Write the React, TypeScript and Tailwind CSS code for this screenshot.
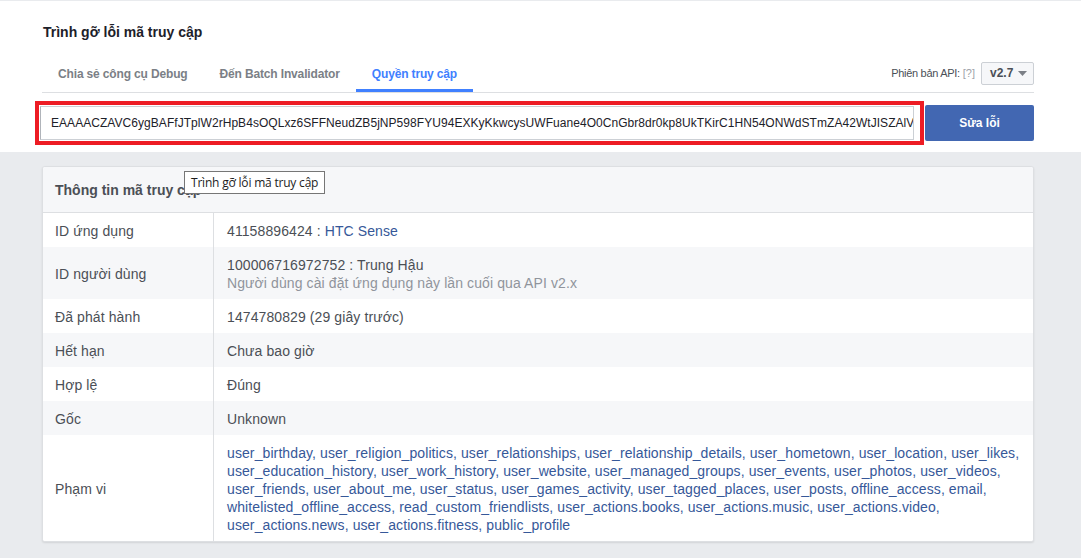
import React from "react";

const token =
  "EAAAACZAVC6ygBAFfJTplW2rHpB4sOQLxz6SFFNeudZB5jNP598FYU94EXKyKkwcysUWFuane4O0CnGbr8dr0kp8UkTKirC1HN54ONWdSTmZA42WtJISZAlV";

const scopeLines = [
  "user_birthday, user_religion_politics, user_relationships, user_relationship_details, user_hometown, user_location, user_likes,",
  "user_education_history, user_work_history, user_website, user_managed_groups, user_events, user_photos, user_videos,",
  "user_friends, user_about_me, user_status, user_games_activity, user_tagged_places, user_posts, offline_access, email,",
  "whitelisted_offline_access, read_custom_friendlists, user_actions.books, user_actions.music, user_actions.video,",
  "user_actions.news, user_actions.fitness, public_profile",
];

function Row({
  label,
  children,
  gray,
}: {
  label: string;
  children: React.ReactNode;
  gray?: boolean;
}) {
  return (
    <div className={`flex ${gray ? "bg-[#f6f7f9]" : "bg-white"}`}>
      <div className="w-[171px] shrink-0 border-r border-[#dddfe2] pl-[12px] pt-[2px] flex items-center text-[14px] leading-[18px] tracking-[0.1px] text-[#4b4f56]">
        {label}
      </div>
      <div className="flex-1 pl-[13px] pt-[9px] pb-[7px] text-[14px] leading-[18px] tracking-[0.1px] text-[#4b4f56]">
        {children}
      </div>
    </div>
  );
}

export default function App() {
  return (
    <div className="relative w-[1081px] h-[558px] overflow-hidden bg-[#e9ebee] font-['Liberation_Sans',Arial,sans-serif]">
      <div className="mt-px h-[151px] bg-white">
        <div className="ml-[42px] w-[992px]">
          <div className="pt-[22px] text-[14px] leading-[18px] font-bold text-[#1d2129] pl-px">
            Trình gỡ lỗi mã truy cập
          </div>
          <div className="mt-[17px] flex items-stretch h-[35px] border-b border-[#dddfe2]">
            <div className="flex">
              <div className="px-[16px] flex items-center pb-[3px] text-[12px] font-bold tracking-[-0.15px] text-[#7b7f86]">
                Chia sẻ công cụ Debug
              </div>
              <div className="px-[16px] flex items-center pb-[3px] text-[12px] font-bold tracking-[-0.15px] text-[#7b7f86]">
                Đến Batch Invalidator
              </div>
              <div className="px-[16px] flex items-center border-b-[3px] border-[#4080ff] text-[12px] font-bold tracking-[-0.15px] text-[#4080ff]">
                Quyền truy cập
              </div>
            </div>
            <div className="ml-auto flex items-center pb-[4px]">
              <span className="text-[11px] tracking-[-0.3px] text-[#4b4f56]">Phiên bản API:</span>
              <span className="ml-[3px] text-[11px] text-[#a0a3a9]">[?]</span>
              <div className="ml-[6px] w-[53px] h-[23px] border border-[#ccd0d5] rounded-[2px] bg-[#f6f7f9] flex items-center pl-[8px] text-[12px] font-bold text-[#4b4f56]">
                v2.7
                <svg width="9" height="5" viewBox="0 0 9 5" className="ml-[5px]">
                  <path d="M0 0 H9 L4.5 5 Z" fill="#7b7f86" />
                </svg>
              </div>
            </div>
          </div>
        </div>
        <div className="mt-[8px] ml-[35px] flex items-center">
          <div className="border-4 border-[#ed1c24] p-px pr-[6px] bg-white">
            <input
              readOnly
              value={token}
              className="block w-[874px] h-[34px] border border-[#ccd0d5] border-l-[#b0b4ba] bg-white pl-[10px] pr-0 text-[12px] tracking-[0.05px] text-[#1d2129] font-['Liberation_Sans',Arial,sans-serif] outline-none"
            />
          </div>
          <button className="ml-px w-[109px] h-[36px] bg-[#4267b2] text-white text-[12px] font-bold rounded-[2px] font-['Liberation_Sans',Arial,sans-serif]">
            Sửa lỗi
          </button>
        </div>
      </div>

      <div className="mt-[14px] ml-[42px] w-[992px] rounded-[3px] border border-[#dddfe2] bg-white shadow-[0_1px_2px_rgba(0,0,0,0.1)] overflow-hidden">
        <div className="h-[46px] bg-[#f6f7f9] border-b border-[#dddfe2] flex items-center pl-[12px] pt-px text-[14px] font-bold text-[#4b4f56]">
          Thông tin mã truy cập
        </div>
        <Row label="ID ứng dụng">
          41158896424 : <span className="text-[#365899]">HTC Sense</span>
        </Row>
        <Row label="ID người dùng" gray>
          <div>100006716972752 : Trung Hậu</div>
          <div className="text-[#90949c]">Người dùng cài đặt ứng dụng này lần cuối qua API v2.x</div>
        </Row>
        <Row label="Đã phát hành">1474780829 (29 giây trước)</Row>
        <Row label="Hết hạn" gray>
          Chưa bao giờ
        </Row>
        <Row label="Hợp lệ">Đúng</Row>
        <Row label="Gốc" gray>
          Unknown
        </Row>
        <Row label="Phạm vi">
          {scopeLines.map((l) => (
            <div key={l} className="whitespace-nowrap text-[#365899]">
              {l}
            </div>
          ))}
        </Row>
      </div>

      <div className="absolute left-[184px] top-[171px] h-[23px] px-[6px] flex items-center bg-white border border-[#767676] text-[12px] tracking-[-0.2px] text-[#1d1d1d] font-['Open_Sans','Noto_Sans',sans-serif]">
        Trình gỡ lỗi mã truy cập
      </div>
    </div>
  );
}
